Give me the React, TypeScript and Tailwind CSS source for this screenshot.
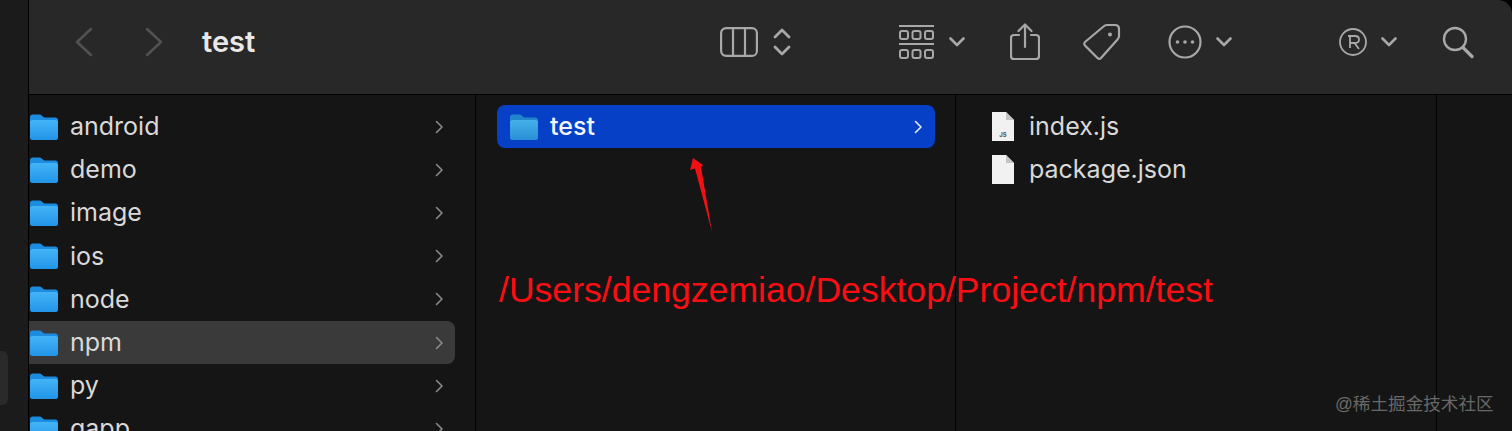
import type { ReactNode } from 'react';

const leftFolders = ['android', 'demo', 'image', 'ios', 'node', 'npm', 'py', 'qapp'];

function Folder({ selected }: { selected?: boolean }) {
    const id = selected ? 'folderSel' : 'folderNormal';
    return (
        <svg width="28" height="26" viewBox="0 0 28 26" className="shrink-0">
            <defs>
                <linearGradient id={id} x1="0" y1="0" x2="0" y2="1">
                    <stop offset="0" stopColor={selected ? '#45b0ea' : '#44b4f7'} />
                    <stop offset="1" stopColor={selected ? '#2a8fd6' : '#2294e8'} />
                </linearGradient>
            </defs>
            <path d="M0 3.500C0 1.500 1 .5 3 .5h6.500c1.500 0 2.300 1 3.500 2.200.6.6 1.200.8 2 .8H25c2 0 3 1 3 3V23c0 2-1 3-3 3H3c-2 0-3-1-3-3Z" fill={selected ? '#2285cc' : '#1c8ce0'} />
            <path d="M0 8.500C0 7 1 6 2.500 6h23C27 6 28 7 28 8.500V23c0 2-1 3-3 3H3c-2 0-3-1-3-3Z" fill={`url(#${id})`} />
        </svg>
    );
}

function Chevron({ bright }: { bright?: boolean }) {
    return (
        <svg width="9" height="14" viewBox="0 0 9 14" fill="none" stroke={bright ? '#e4ebfa' : '#8a8a8a'} strokeWidth="1.600" strokeLinecap="round" strokeLinejoin="round">
            <path d="M1.500 1.500 7 7l-5.500 5.500" />
        </svg>
    );
}

function DownCaret() {
    return (
        <svg width="16" height="10" viewBox="0 0 16 10" fill="none" stroke="#a8a8a8" strokeWidth="2.600" strokeLinecap="round" strokeLinejoin="round">
            <path d="M1.500 1.500 8 8l6.500-6.500" />
        </svg>
    );
}

function Row({ children, className }: { children: ReactNode; className?: string }) {
    return <div className={`flex h-[43.2px] shrink-0 items-center text-[25px] ${className ?? ''}`}>{children}</div>;
}

function Toolbar() {
    return (
        <div className="flex h-[94px] shrink-0 items-center rounded-tr-[14px] bg-[#282828] pb-[10px]">
            <svg width="18" height="30" viewBox="0 0 18 30" fill="none" stroke="#525252" strokeWidth="2.500" strokeLinecap="round" strokeLinejoin="round" className="ml-[46px]">
                <path d="M16 2 2 15l14 13" />
            </svg>
            <svg width="18" height="30" viewBox="0 0 18 30" fill="none" stroke="#525252" strokeWidth="2.500" strokeLinecap="round" strokeLinejoin="round" className="ml-[52px]">
                <path d="m2 2 14 13L2 28" />
            </svg>
            <span className="ml-[39px] text-[29px] font-semibold text-[#e8e8e8]">test</span>

            <div className="ml-auto flex items-center text-[#a8a8a8]">
                {/* column view with up/down */}
                <svg width="38" height="30" viewBox="0 0 38 30" fill="none" stroke="currentColor" strokeWidth="2.200">
                    <rect x="1.100" y="1.100" width="35.800" height="27.800" rx="5" />
                    <path d="M13 1v28M25 1v28" />
                </svg>
                <svg width="18" height="28" viewBox="0 0 18 28" fill="none" stroke="currentColor" strokeWidth="2.800" strokeLinecap="round" strokeLinejoin="round" className="ml-[15px]">
                    <path d="m2 9 7-7 7 7M2 19l7 7 7-7" />
                </svg>
                {/* group */}
                <svg width="36" height="34" viewBox="0 0 36 34" fill="none" stroke="currentColor" className="ml-[108px]">
                    <path d="M0 1h35M0 19h35" strokeWidth="2" />
                    <g strokeWidth="2">
                        <rect x="1" y="6" width="8" height="8" rx="2" />
                        <rect x="13.500" y="6" width="8" height="8" rx="2" />
                        <rect x="26" y="6" width="8" height="8" rx="2" />
                        <rect x="1" y="25" width="8" height="8" rx="2" />
                        <rect x="13.500" y="25" width="8" height="8" rx="2" />
                        <rect x="26" y="25" width="8" height="8" rx="2" />
                    </g>
                </svg>
                <span className="ml-[14px]"><DownCaret /></span>
                {/* share */}
                <svg width="30" height="38" viewBox="0 0 30 38" fill="none" stroke="currentColor" strokeWidth="2.200" strokeLinecap="round" strokeLinejoin="round" className="ml-[45px]">
                    <path d="M9 12H4c-2 0-3 1-3 3v18c0 2 1 3 3 3h22c2 0 3-1 3-3V15c0-2-1-3-3-3h-5" />
                    <path d="M15 24V2M8.500 8 15 1.500 21.500 8" />
                </svg>
                {/* tag */}
                <svg width="38" height="38" viewBox="0 0 38 38" fill="none" stroke="currentColor" strokeWidth="2.200" strokeLinejoin="round" className="ml-[43px]">
                    <path d="M24 2h8c2.500 0 4 1.500 4 4v7c0 1.500-.5 2.500-1.500 3.500L18 35c-1 1-2.500 1-3.500 0L2 22.500c-1-1-1-2.500 0-3.500L20.500 3.500C21.500 2.500 22.500 2 24 2Z" />
                    <circle cx="27" cy="11.500" r="2" fill="currentColor" stroke="none" />
                </svg>
                {/* action */}
                <svg width="34" height="34" viewBox="0 0 34 34" fill="none" stroke="currentColor" strokeWidth="2.200" className="ml-[47px]">
                    <circle cx="17" cy="17" r="15.500" />
                    <circle cx="9.500" cy="17" r="1.800" fill="currentColor" stroke="none" />
                    <circle cx="17" cy="17" r="1.800" fill="currentColor" stroke="none" />
                    <circle cx="24.500" cy="17" r="1.800" fill="currentColor" stroke="none" />
                </svg>
                <span className="ml-[14px]"><DownCaret /></span>
                {/* registered mark */}
                <svg width="28" height="28" viewBox="0 0 28 28" fill="none" stroke="currentColor" strokeWidth="1.800" className="ml-[107px]">
                    <circle cx="14" cy="14" r="13" />
                    <path d="M9 8h7c2.500 0 4 1.500 4 3.500S18.500 15 16 15h-5M11 8v12M15.500 15l4.500 6" />
                </svg>
                <span className="ml-[14px]"><DownCaret /></span>
                {/* search */}
                <svg width="32" height="33" viewBox="0 0 32 33" fill="none" stroke="currentColor" className="ml-[45px] mr-[38px]">
                    <circle cx="13" cy="13" r="11" strokeWidth="2.400" />
                    <path d="m21 21.500 9 9" strokeWidth="3.200" strokeLinecap="round" />
                </svg>
            </div>
        </div>
    );
}

function DocFile({ label }: { label?: boolean }) {
    return (
        <svg width="22" height="29" viewBox="0 0 22 29" className="shrink-0">
            <path d="M0 0h14l8 8v21H0Z" fill="#f1f1f1" />
            <path d="M14 0v8h8Z" fill="#c4c4c4" />
            {label && (
                <text x="11" y="25" textAnchor="middle" fontSize="6" fontWeight="700" fill="#555">
                    JS
                </text>
            )}
        </svg>
    );
}

export default function App() {
    return (
        <div className="relative flex h-[431px] w-[1512px] overflow-hidden bg-black font-['Inter','Liberation_Sans',sans-serif]">
            {/* strip of the sidebar */}
            <div className="relative w-[28px] shrink-0 bg-[#1b1b1b]">
                <div className="absolute top-[351px] left-0 h-[54px] w-[8px] rounded-r-md bg-[#2a2a2a]" />
            </div>
            <div className="flex min-w-0 flex-1 flex-col border-l border-black">
                <Toolbar />
                <div className="flex min-h-0 flex-1 overflow-hidden border-t border-black bg-[#151515] text-[#d9d9d9]">
                    <div className="w-[446px] shrink-0 pt-[10px] pr-[20px]">
                        {leftFolders.map((name) => (
                            <Row key={name} className={name === 'npm' ? 'rounded-r-lg bg-[#3a3a3a]' : ''}>
                                <span className="ml-px flex"><Folder /></span>
                                <span className="ml-[12px] leading-none">{name}</span>
                                <span className="mr-[11px] ml-auto"><Chevron /></span>
                            </Row>
                        ))}
                    </div>
                    <div className="w-[480px] shrink-0 border-l border-black pt-[10px] pr-[20px] pl-[21px]">
                        <Row className="rounded-lg bg-[#0540c6] pr-[12px] pl-[13px] text-[#f2f5ff]">
                            <Folder selected />
                            <span className="ml-[12px] leading-none font-medium">test</span>
                            <span className="ml-auto"><Chevron bright /></span>
                        </Row>
                    </div>
                    <div className="w-[481px] shrink-0 border-l border-black pt-[10px] pl-[36px]">
                        <Row>
                            <DocFile label />
                            <span className="ml-[15px] leading-none">index.js</span>
                        </Row>
                        <Row>
                            <DocFile />
                            <span className="ml-[15px] leading-none">package.json</span>
                        </Row>
                    </div>
                    <div className="flex-1 border-l border-black" />
                </div>
            </div>

            {/* screenshot annotations */}
            <svg width="30" height="76" viewBox="0 0 30 76" className="absolute top-[157px] left-[688px]">
                <path d="M5 1 15 8 13 10 24 75 7 11.500 2 13Z" fill="#f40f14" />
            </svg>
            <span className="absolute top-[268px] left-[499px] font-['Liberation_Sans',sans-serif] text-[35.6px] leading-[44px] whitespace-nowrap text-[#fb0d14]">
                /Users/dengzemiao/Desktop/Project/npm/test
            </span>
            <span className="absolute top-[392px] left-[1335px] font-['Liberation_Sans','Noto_Sans_CJK_SC',sans-serif] text-[17.6px] leading-[24px] whitespace-nowrap text-[#686868]">
                @稀土掘金技术社区
            </span>
        </div>
    );
}
